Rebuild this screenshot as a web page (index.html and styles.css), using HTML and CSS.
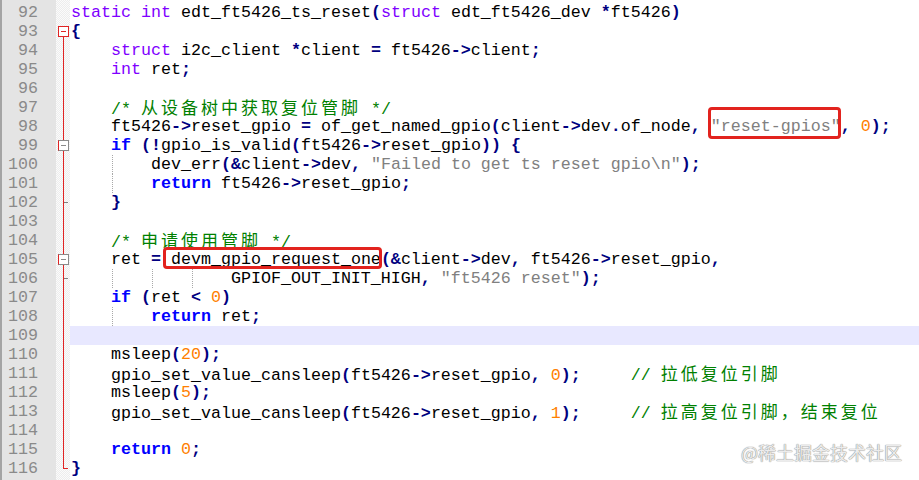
FILE: index.html
```html
<!DOCTYPE html>
<html lang="zh">
<head>
<meta charset="utf-8">
<title>edt_ft5426_ts_reset</title>
<link rel="stylesheet" href="styles.css">
</head>
<body>
<div class="editor">
  <div class="gutter">
    <div>92</div><div>93</div><div>94</div><div>95</div><div>96</div><div>97</div><div>98</div><div>99</div><div>100</div><div>101</div><div>102</div><div>103</div><div>104</div><div>105</div><div>106</div><div>107</div><div>108</div><div>109</div><div>110</div><div>111</div><div>112</div><div>113</div><div>114</div><div>115</div><div>116</div>
  </div>
  <div class="fold">
    <div class="f"></div>
    <div class="f ln top"><i class="bx red"></i></div>
    <div class="f ln"></div>
    <div class="f ln"></div>
    <div class="f ln"></div>
    <div class="f ln"></div>
    <div class="f ln"></div>
    <div class="f ln"><i class="bx"></i></div>
    <div class="f ln"></div>
    <div class="f ln"></div>
    <div class="f ln tick"></div>
    <div class="f ln"></div>
    <div class="f ln"></div>
    <div class="f ln"><i class="bx"></i></div>
    <div class="f ln tick"></div>
    <div class="f ln"></div>
    <div class="f ln"></div>
    <div class="f ln"></div>
    <div class="f ln"></div>
    <div class="f ln"></div>
    <div class="f ln"></div>
    <div class="f ln"></div>
    <div class="f ln"></div>
    <div class="f ln"></div>
    <div class="f end"></div>
  </div>
  <div class="code">
<div class="l"><span class="k">static</span> <span class="k">int</span> edt_ft5426_ts_reset<span class="o">(</span><span class="k">struct</span> edt_ft5426_dev <span class="o">*</span>ft5426<span class="o">)</span></div>
<div class="l"><span class="o">{</span></div>
<div class="l">    <span class="k">struct</span> i2c_client <span class="o">*</span>client <span class="o">=</span> ft5426<span class="o">-&gt;</span>client<span class="o">;</span></div>
<div class="l">    <span class="k">int</span> ret<span class="o">;</span></div>
<div class="l"></div>
<div class="l">    <span class="c">/* <span class="z">从设备树中获取复位管脚</span> */</span></div>
<div class="l">    ft5426<span class="o">-&gt;</span>reset_gpio <span class="o">=</span> of_get_named_gpio<span class="o">(</span>client<span class="o">-&gt;</span>dev<span class="o">.</span>of_node<span class="o">,</span> <span class="s">"reset-gpios"</span><span class="o">,</span> <span class="n">0</span><span class="o">);</span></div>
<div class="l">    <span class="w">if</span> <span class="o">(!</span>gpio_is_valid<span class="o">(</span>ft5426<span class="o">-&gt;</span>reset_gpio<span class="o">))</span> <span class="o">{</span></div>
<div class="l g1">        dev_err<span class="o">(&amp;</span>client<span class="o">-&gt;</span>dev<span class="o">,</span> <span class="s">"Failed to get ts reset gpio\n"</span><span class="o">);</span></div>
<div class="l g1">        <span class="w">return</span> ft5426<span class="o">-&gt;</span>reset_gpio<span class="o">;</span></div>
<div class="l">    <span class="o">}</span></div>
<div class="l"></div>
<div class="l">    <span class="c">/* <span class="z">申请使用管脚</span> */</span></div>
<div class="l">    ret <span class="o">=</span> devm_gpio_request_one<span class="o">(&amp;</span>client<span class="o">-&gt;</span>dev<span class="o">,</span> ft5426<span class="o">-&gt;</span>reset_gpio<span class="o">,</span></div>
<div class="l g3">                GPIOF_OUT_INIT_HIGH<span class="o">,</span> <span class="s">"ft5426 reset"</span><span class="o">);</span></div>
<div class="l">    <span class="w">if</span> <span class="o">(</span>ret <span class="o">&lt;</span> <span class="n">0</span><span class="o">)</span></div>
<div class="l g1">        <span class="w">return</span> ret<span class="o">;</span></div>
<div class="l cur"></div>
<div class="l">    msleep<span class="o">(</span><span class="n">20</span><span class="o">);</span></div>
<div class="l">    gpio_set_value_cansleep<span class="o">(</span>ft5426<span class="o">-&gt;</span>reset_gpio<span class="o">,</span> <span class="n">0</span><span class="o">);</span>     <span class="c">// <span class="z">拉低复位引脚</span></span></div>
<div class="l">    msleep<span class="o">(</span><span class="n">5</span><span class="o">);</span></div>
<div class="l">    gpio_set_value_cansleep<span class="o">(</span>ft5426<span class="o">-&gt;</span>reset_gpio<span class="o">,</span> <span class="n">1</span><span class="o">);</span>     <span class="c">// <span class="z">拉高复位引脚，结束复位</span></span></div>
<div class="l"></div>
<div class="l">    <span class="w">return</span> <span class="n">0</span><span class="o">;</span></div>
<div class="l"><span class="o">}</span></div>
    <div class="mark mark-a"></div>
    <div class="mark mark-b"></div>
  </div>
  <div class="watermark">@稀土掘金技术社区</div>
</div>
</body>
</html>
```
FILE: styles.css
```css
html, body {
  margin: 0;
  padding: 0;
  background: #ffffff;
}

body {
  width: 919px;
  height: 480px;
  overflow: hidden;
}

.editor {
  position: relative;
  display: flex;
  height: 480px;
  font-family: "Liberation Mono", "Courier New", monospace;
  font-size: 16.66px;
  line-height: 19px;
}

.gutter {
  box-sizing: border-box;
  width: 56px;
  flex: none;
  border-left: 2px solid #a4a4a4;
  background: #e4e4e4;
  padding: 3px 18px 0 0;
  text-align: right;
  color: #8a8a8a;
}

.gutter div {
  height: 19px;
}

.fold {
  width: 14px;
  flex: none;
  padding-top: 3px;
  background: repeating-conic-gradient(#ededed 0 25%, #fbfbfb 0 50%) 0 0 / 2px 2px;
}

.f {
  position: relative;
  height: 19px;
}

.f.ln::before {
  content: "";
  position: absolute;
  left: 7px;
  top: 0;
  bottom: 0;
  width: 1px;
  background: #e02424;
}

.f.ln.top::before {
  top: 15px;
}

.f.tick::after {
  content: "";
  position: absolute;
  left: 8px;
  top: 9px;
  width: 4px;
  height: 1px;
  background: #808080;
}

.f.end::before {
  content: "";
  position: absolute;
  left: 7px;
  top: 0;
  height: 10px;
  width: 1px;
  background: #e02424;
}

.f.end::after {
  content: "";
  position: absolute;
  left: 7px;
  top: 9px;
  width: 5px;
  height: 1px;
  background: #e02424;
}

.bx {
  position: absolute;
  left: 2px;
  top: 4px;
  box-sizing: border-box;
  width: 11px;
  height: 11px;
  border: 1px solid #8a8a8a;
  border-left-color: #e02424;
  background: #ffffff;
}

.bx::after {
  content: "";
  position: absolute;
  left: 2px;
  top: 4px;
  width: 5px;
  height: 1px;
  background: #8a8a8a;
}

.bx.red {
  border-color: #e02424;
}

.bx.red::after {
  background: #e02424;
}

.code {
  position: relative;
  flex: 1;
  padding-top: 3px;
  color: #000000;
}

.l {
  height: 19px;
  padding-left: 1px;
  white-space: pre;
}

.l.cur {
  background: #e8e8ff;
}

.g1 {
  background-image: repeating-linear-gradient(#a8a8a8 0 1px, transparent 1px 2px);
  background-size: 1px 100%;
  background-repeat: no-repeat;
  background-position: 42px 0;
}

.g3 {
  background-image:
    repeating-linear-gradient(#a8a8a8 0 1px, transparent 1px 2px),
    repeating-linear-gradient(#a8a8a8 0 1px, transparent 1px 2px),
    repeating-linear-gradient(#a8a8a8 0 1px, transparent 1px 2px);
  background-size: 1px 100%;
  background-repeat: no-repeat;
  background-position: 42px 0, 82px 0, 122px 0;
}

.k {
  color: #8000ff;
}

.w {
  color: #0000ff;
  font-weight: bold;
}

.o {
  color: #000080;
  font-weight: bold;
}

.n {
  color: #ff8000;
}

.s {
  color: #808080;
}

.c {
  color: #008000;
}

.z {
  font-family: "Noto Sans CJK SC", sans-serif;
  font-size: 17px;
  letter-spacing: 3px;
  line-height: 1;
}

.mark {
  position: absolute;
  box-sizing: border-box;
  border: 3px solid #e2231e;
  border-radius: 4px;
}

.mark-a {
  left: 638px;
  top: 107px;
  width: 133px;
  height: 32px;
}

.mark-b {
  left: 93px;
  top: 247px;
  width: 219px;
  height: 22px;
}

.watermark {
  position: absolute;
  right: 17px;
  top: 440px;
  font-family: "Noto Sans CJK SC", sans-serif;
  font-size: 18px;
  line-height: 24px;
  color: #ececec;
  text-shadow: 0 0 1px #8a8a8a, 0 0 1px #8a8a8a;
}
```
